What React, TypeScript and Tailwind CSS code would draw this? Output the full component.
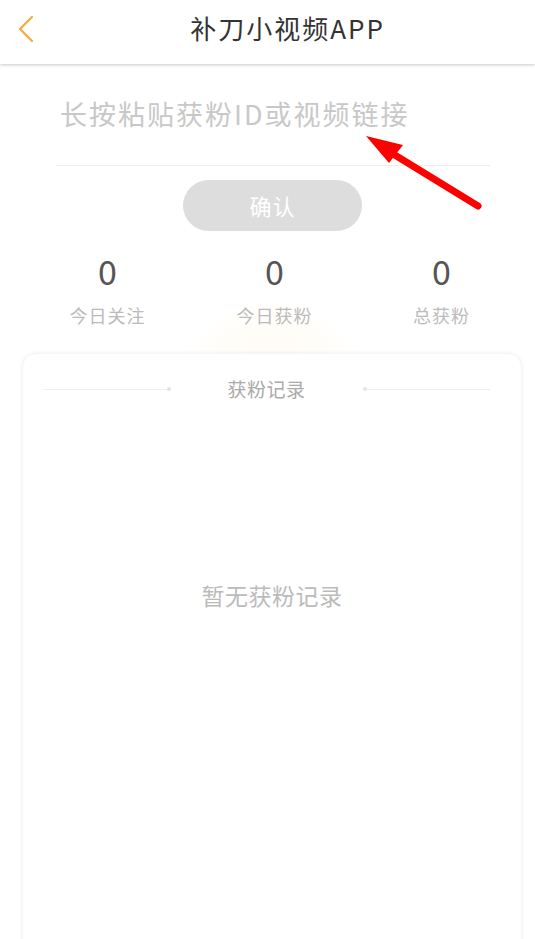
import React from "react";

const font = { fontFamily: '"Noto Sans CJK SC", "Noto Sans", sans-serif' };

function Stat({ value, label }: { value: string; label: string }) {
  return (
    <div className="flex flex-col items-center">
      <span className="text-[34px] leading-[40px] text-[#555555]">{value}</span>
      <span className="mt-[12px] text-[18px] leading-[24px] tracking-[1px] text-[#bbbbbb]">{label}</span>
    </div>
  );
}

export default function App() {
  return (
    <div className="relative w-[535px] h-[939px] overflow-hidden bg-white" style={font}>
      {/* Header */}
      <div className="relative z-10 h-[64px] flex items-center justify-center pb-[8px] bg-white shadow-[0_1px_3px_rgba(0,0,0,0.22)]">
        <svg className="absolute left-[14px] top-[14px]" width="24" height="30" viewBox="0 0 24 30" fill="none">
          <path d="M18 3 L6 15 L18 27" stroke="#f5ab3c" strokeWidth="2.2" strokeLinecap="round" strokeLinejoin="round" />
        </svg>
        <span className="ml-[40px] text-[26px] leading-[34px] text-[#333333] tracking-[2px]">补刀小视频APP</span>
      </div>

      {/* Input */}
      <div className="ml-[56px] mr-[45px] mt-[28px] h-[74px] border-b border-[#eeeeee] flex items-start">
        <span className="text-[27px] leading-[44px] tracking-[2px] text-[#c8c8c8] ml-[4px]">长按粘贴获粉ID或视频链接</span>
      </div>

      {/* Red arrow annotation */}
      <svg className="absolute left-0 top-0 z-20" width="535" height="939" viewBox="0 0 535 939" fill="none">
        <line x1="478" y1="206" x2="385" y2="149" stroke="#ff0000" strokeWidth="7" strokeLinecap="round" />
        <polygon points="366,136 403,145 389,163" fill="#ff0000" />
      </svg>

      {/* Confirm button */}
      <div className="flex justify-center mt-[14px] pl-[10px]">
        <button className="w-[179px] h-[51px] rounded-full bg-[#dddddd] text-white text-[22px] tracking-[1px]">确认</button>
      </div>

      {/* Stats */}
      <div className="relative">
        <div className="absolute left-[170px] top-[52px] w-[204px] h-[128px] rounded-t-full bg-[radial-gradient(ellipse_at_50%_100%,rgba(255,236,190,0.35),rgba(255,246,225,0.2)_60%,rgba(255,255,255,0)_75%)]" />
        <div className="relative grid grid-cols-[167px_167px_167px] pl-[24px] mt-[20px]">
          <Stat value="0" label="今日关注" />
          <Stat value="0" label="今日获粉" />
          <Stat value="0" label="总获粉" />
        </div>
      </div>

      {/* Record card */}
      <div className="relative ml-[22px] mr-[13px] mt-[26px] h-[700px] rounded-t-[14px] bg-white shadow-[0_0_4px_rgba(0,0,0,0.06)] border border-[#f6f6f6]">
        <div className="flex items-center justify-center mt-[22px] pl-[20px] pr-[31px]">
          <div className="flex-1 flex items-center">
            <div className="flex-1 h-px bg-[#eeeeee]" />
            <div className="w-[4px] h-[4px] rounded-full bg-[#e4e4e4]" />
          </div>
          <span className="mx-[57px] text-[19px] leading-[26px] tracking-[0.5px] text-[#aaaaaa]">获粉记录</span>
          <div className="flex-1 flex items-center">
            <div className="w-[4px] h-[4px] rounded-full bg-[#e4e4e4]" />
            <div className="flex-1 h-px bg-[#eeeeee]" />
          </div>
        </div>
        <div className="flex justify-center mt-[177px]">
          <span className="text-[23px] leading-[32px] tracking-[0.5px] text-[#bbbbbb]">暂无获粉记录</span>
        </div>
      </div>
    </div>
  );
}
